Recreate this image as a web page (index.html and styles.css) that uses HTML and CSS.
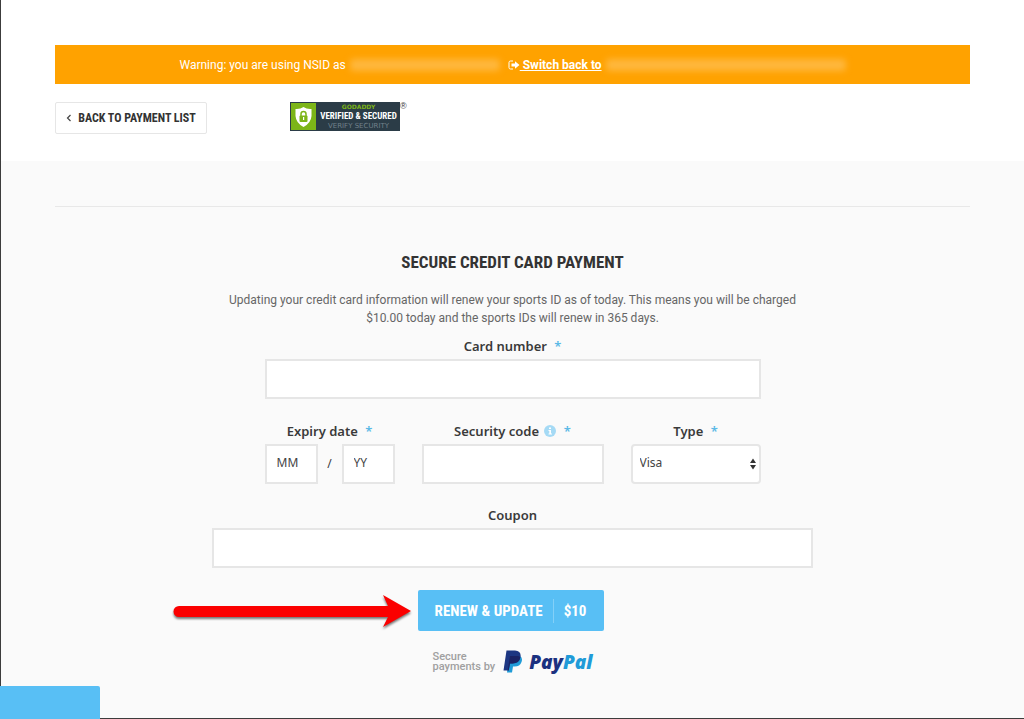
FILE: index.html
```html
<!DOCTYPE html>
<html lang="en">
<head>
<meta charset="utf-8">
<meta name="viewport" content="width=device-width, initial-scale=1">
<title>Secure Credit Card Payment</title>
<link rel="stylesheet" href="styles.css">
</head>
<body>
<div class="page">
  <header class="top">
    <div class="warning">
      <span>Warning: you are using NSID as</span>
      <span class="redacted redacted-user" aria-hidden="true"></span>
      <svg class="switch-icon" viewBox="0 0 12 10" aria-hidden="true"><path d="M5 1H2.5Q1 1 1 2.500V7.500Q1 9 2.500 9H5" fill="none" stroke="#fff" stroke-width="1"/><path d="M3.500 3.500H7V1.200L11.500 5L7 8.800V6.500H3.500Z" fill="#fff"/></svg>
      <a class="switch-link" href="#">&nbsp;Switch back to</a>
      <span class="redacted redacted-admin" aria-hidden="true"></span>
    </div>
    <div class="toolbar">
      <a class="back" href="#"><svg class="chevron" viewBox="0 0 6 8" aria-hidden="true"><path d="M4.500 1L1.500 4L4.500 7" fill="none" stroke="#444" stroke-width="1.200"/></svg>BACK TO PAYMENT LIST</a>
      <div class="seal">
        <div class="seal-box">
          <svg class="seal-shield" viewBox="0 0 27 29" aria-hidden="true"><rect width="27" height="29" fill="#2b3c47"/><rect x="1" y="1" width="25" height="27" fill="#7cb518"/><path d="M13.500 5Q17 7.500 21.500 7V14Q21 21 13.500 25Q6 21 5.500 14V7Q10 7.500 13.500 5Z" fill="#fff"/><path d="M11 14V12Q11 9.500 13.500 9.500T16 12V14" fill="none" stroke="#7cb518" stroke-width="1.500"/><rect x="9.500" y="13.500" width="8" height="6.500" rx="1" fill="#7cb518"/><rect x="13" y="15" width="1.200" height="3" fill="#fff"/></svg>
          <div class="seal-text">
            <span class="seal-brand">GODADDY</span>
            <span class="seal-main">VERIFIED &amp; SECURED</span>
            <span class="seal-sub">VERIFY SECURITY</span>
          </div>
        </div>
        <span class="seal-reg">®</span>
      </div>
    </div>
  </header>

  <main class="content">
    <hr class="rule">
    <form class="payment">
      <h1 class="title">SECURE CREDIT CARD PAYMENT</h1>
      <p class="intro">Updating your credit card information will renew your sports ID as of today. This means you will be charged $10.00 today and the sports IDs will renew in 365 days.</p>
      <div class="card-fields">
        <div class="field">
          <label class="label" for="card">Card number <span class="star">*</span></label>
          <input class="input" id="card" type="text">
        </div>
        <div class="field-row">
          <div class="field">
            <label class="label" for="month">Expiry date <span class="star">*</span></label>
            <div class="expiry">
              <input class="input" id="month" type="text" placeholder="MM">
              <span class="slash">/</span>
              <input class="input" id="year" type="text" placeholder="YY" aria-label="Expiry year">
            </div>
          </div>
          <div class="field">
            <label class="label" for="code">Security code <svg class="info" viewBox="0 0 12 12" aria-hidden="true"><circle cx="6" cy="6" r="6" fill="#a5daf5"/><path d="M5 2.500H7V4H5ZM4.500 5H7V8.500H8V9.500H4.500V8.500H5.300V6H4.500Z" fill="#fff"/></svg> <span class="star">*</span></label>
            <input class="input" id="code" type="text">
          </div>
          <div class="field">
            <label class="label" for="type">Type <span class="star">*</span></label>
            <div class="select-wrap">
              <select class="input select" id="type"><option>Visa</option></select>
              <svg class="arrows" viewBox="0 0 6 12" aria-hidden="true"><path d="M0 5L3 0.500L6 5ZM0 7L3 11.500L6 7Z" fill="#333"/></svg>
            </div>
          </div>
        </div>
      </div>
      <div class="field coupon">
        <label class="label" for="coupon">Coupon</label>
        <input class="input" id="coupon" type="text">
      </div>
      <div class="submit-wrap">
        <button class="submit" type="submit"><span>RENEW &amp; UPDATE</span><span class="price">$10</span></button>
        <svg class="pointer" viewBox="0 0 242 40" aria-hidden="true"><path d="M6 14H215L210 3L238 19L210 35L215 25H6A5.500 5.500 0 0 1 6 14Z" fill="#fb0000"/></svg>
      </div>
      <div class="paypal">
        <span class="secure">Secure<br>payments by</span>
        <svg class="pp-mark" viewBox="0 0 20 23" aria-hidden="true"><path d="M6 6H17Q20 8 18.500 12Q17 16.500 11.500 16.500H10L9 22.500H4Z" fill="#1f9bd7"/><path d="M3.500 0.500H12Q18.500 1 17.500 7Q16.500 13.500 9.500 13.500H7L5.700 20.500H0.500Z" fill="#1d3682"/><path d="M7 6H15Q17 6.300 17.300 7.800Q16 13.500 9.500 13.500H7L5.700 20.500H4.700Z" fill="#1b2364"/></svg>
        <span class="pp-name">Pay<span class="pp-pal">Pal</span></span>
      </div>
    </form>
  </main>
  <div class="corner-tab"></div>
</div>
</body>
</html>
```
FILE: styles.css
```css
* { box-sizing: border-box; }
body {
  margin: 0;
  background: #fafafa;
  color: #3a3a3a;
  font: 12px/18px "Noto Sans", sans-serif;
}
.page {
  min-height: 100vh;
  border-left: 1px solid #3c3c3c;
  border-bottom: 1px solid #3c3c3c;
}
.top {
  padding: 45px 54px 27px;
  background: #fff;
}
.warning {
  display: flex;
  align-items: center;
  justify-content: center;
  height: 39px;
  background: #ffa200;
  color: #fff;
  margin-bottom: 18px;
  font-family: Roboto, sans-serif;
}
.redacted {
  height: 12px;
  border-radius: 4px;
  background: #ffb73c;
  filter: blur(3px);
}
.redacted-user { width: 150px; margin: 0 8px 0 4px; }
.redacted-admin { width: 240px; margin-left: 4px; }
.switch-icon { width: 12px; height: 10px; }
.switch-link { color: #fff; font-weight: 700; }
.toolbar { display: flex; align-items: flex-start; gap: 83px; }
.back {
  display: flex;
  align-items: center;
  justify-content: center;
  gap: 6px;
  width: 152px;
  height: 32px;
  border: 1px solid #e6e6e6;
  border-radius: 2px;
  color: #333;
  font: 700 12px/18px "Roboto Condensed", "Liberation Sans", sans-serif;
  text-decoration: none;
  white-space: nowrap;
}
.chevron { width: 6px; height: 8px; }
.seal { display: flex; align-items: flex-start; }
.seal-box { display: flex; width: 110px; height: 29px; background: #2b3c47; }
.seal-shield { width: 27px; height: 29px; flex: none; }
.seal-text {
  display: flex;
  flex: 1;
  flex-direction: column;
  align-items: center;
  justify-content: center;
  white-space: nowrap;
}
.seal-brand { color: #7cb518; font: 700 6px/8px "DejaVu Sans", sans-serif; }
.seal-main { color: #fff; font: 700 9px/11px "Roboto Condensed", sans-serif; }
.seal-sub { color: #71818b; font: 7px/8px "DejaVu Sans", sans-serif; }
.seal-reg { font: 9px/9px "Liberation Sans", sans-serif; }
.content { padding: 45px 54px 44px; }
.rule { margin: 0 0 43px; border: 0; border-top: 1px solid #e8e8e8; }
.payment { display: flex; flex-direction: column; align-items: center; }
.title {
  margin: 0 0 17px;
  color: #333;
  font: 700 17px/24px "Roboto Condensed", "Liberation Sans", sans-serif;
}
.intro {
  max-width: 600px;
  margin: 0;
  text-align: center;
  color: #666;
  font-family: Roboto, sans-serif;
}
.card-fields { width: 100%; max-width: 496px; }
.label {
  display: block;
  height: 32px;
  padding-top: 10px;
  text-align: center;
  font-size: 13px;
  font-weight: 600;
}
.star { margin-left: 4px; color: #5bb9e6; }
.info { width: 12px; height: 12px; margin-left: 2px; vertical-align: -1px; }
.input {
  display: block;
  width: 100%;
  height: 40px;
  padding: 0 10px;
  border: 2px solid #e6e6e6;
  border-radius: 0;
  background: #fff;
  color: #444;
  font: inherit;
}
.input::placeholder { color: #444; opacity: 1; }
.field-row {
  display: grid;
  grid-template-columns: 130fr 182fr 130fr;
  gap: 27px;
  margin-top: 13px;
}
.expiry { display: grid; grid-template-columns: 1fr 24px 1fr; align-items: center; }
.expiry .input { padding-bottom: 3px; }
.slash { text-align: center; }
.select-wrap { position: relative; }
.select { appearance: none; padding: 0 7px 3px; border-radius: 4px; }
.arrows {
  position: absolute;
  top: 14px;
  right: 5px;
  width: 6px;
  height: 12px;
  pointer-events: none;
}
.coupon { width: 100%; max-width: 601px; margin-top: 12px; }
.submit-wrap { position: relative; margin: 22px 4px 0 0; }
.submit {
  display: flex;
  align-items: center;
  justify-content: center;
  width: 186px;
  height: 41px;
  padding: 0;
  border: 0;
  border-radius: 2px;
  background: #58bff5;
  color: #fff;
  font: 700 15px/24px "Roboto Condensed", "Liberation Sans", sans-serif;
}
.price { margin-left: 10px; padding-left: 10px; border-left: 1px solid #83d0f8; }
.pointer {
  position: absolute;
  top: 2px;
  right: calc(100% + 3px);
  width: 242px;
  height: 40px;
  filter: drop-shadow(0 2px 1px #777);
}
.paypal { display: flex; align-items: center; margin-top: 19px; }
.secure { color: #a0a0a0; font: 500 11px/10px Roboto, sans-serif; }
.pp-mark { width: 20px; height: 23px; margin: 0 6px 0 8px; }
.pp-name { color: #1b3180; font: italic 800 19px/22px "Open Sans", sans-serif; }
.pp-pal { color: #209bd8; }
.corner-tab {
  position: fixed;
  left: 0;
  bottom: 0;
  width: 100px;
  height: 33px;
  border-radius: 0 2px 0 0;
  background: #58bff5;
}
```
